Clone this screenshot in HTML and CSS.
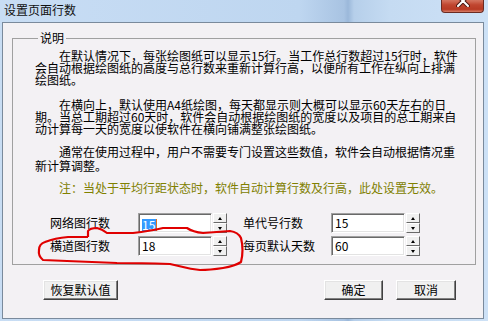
FILE: index.html
```html
<!DOCTYPE html>
<html lang="zh-CN">
<head>
    <meta charset="UTF-8">
    <title>设置页面行数</title>
    <link rel="stylesheet" href="styles.css">
</head>
<body>
    <div class="window">
        <div class="titlebar">
            <span class="title">设置页面行数</span>
            <div class="close">
                <svg width="14" height="11" viewBox="0 0 14 11">
                    <path d="M2 0 L12 10 M12 0 L2 10" stroke="#4a1a14" stroke-width="4" stroke-linecap="round"/>
                    <path d="M2 0 L12 10 M12 0 L2 10" stroke="#ffffff" stroke-width="2" stroke-linecap="round"/>
                </svg>
            </div>
        </div>

        <div class="client">
            <fieldset class="group">
                <legend>说明</legend>
                <p class="desc">在默认情况下，每张绘图纸可以显示15行。当工作总行数超过15行时，软件会自动根据绘图纸的高度与总行数来重新计算行高，以便所有工作在纵向上排满绘图纸。</p>
                <p class="desc desc-2">在横向上，默认使用A4纸绘图，每天都显示则大概可以显示60天左右的日期。当总工期超过60天时，软件会自动根据绘图纸的宽度以及项目的总工期来自动计算每一天的宽度以使软件在横向铺满整张绘图纸。</p>
                <p class="desc desc-3">通常在使用过程中，用户不需要专门设置这些数值，软件会自动根据情况重新计算调整。</p>
                <p class="desc note">注：当处于平均行距状态时，软件自动计算行数及行高，此处设置无效。</p>

                <div class="fields">
                    <div class="field">
                        <span class="label">网络图行数</span>
                        <div class="edit"><span class="sel">15</span></div>
                        <div class="spin"><span class="up"></span><span class="down"></span></div>
                    </div>
                    <div class="field">
                        <span class="label">单代号行数</span>
                        <div class="edit">15</div>
                        <div class="spin"><span class="up"></span><span class="down"></span></div>
                    </div>
                    <div class="field">
                        <span class="label">横道图行数</span>
                        <div class="edit">18</div>
                        <div class="spin"><span class="up"></span><span class="down"></span></div>
                    </div>
                    <div class="field">
                        <span class="label">每页默认天数</span>
                        <div class="edit">60</div>
                        <div class="spin"><span class="up"></span><span class="down"></span></div>
                    </div>
                </div>
            </fieldset>

            <div class="actions">
                <button class="btn btn-reset">恢复默认值</button>
                <button class="btn btn-ok">确定</button>
                <button class="btn btn-cancel">取消</button>
            </div>
        </div>

        <!-- 红色手绘圈注 -->
        <svg class="mark" width="488" height="321" viewBox="0 0 488 321">
            <path d="M88,237 L88,231 Q90,228 97,228 Q102,229 107,233 L133,233 Q150,231 163,228 L187,228 Q193,232 203,233 L230,231 Q238,232 241,238 Q244,250 241,262 Q235,266 223,268 Q210,270 200,270 Q190,269 183,267 L170,264 Q140,263 117,263 L67,261 L43,260 Q38,256 39,250 Q39,244 45,242 Q55,238 68,237 L88,237"
                  fill="none" stroke="#e00000" stroke-width="2.2" stroke-linejoin="round"/>
        </svg>
    </div>
</body>
</html>
```

FILE: styles.css
```css
body {
    margin: 0;
    padding: 0;
    background-color: #c4daf1;
    font-family: "Noto Sans CJK SC", "Noto Sans", sans-serif;
    font-size: 12px;
    color: #000;
}

.window {
    position: relative;
    width: 488px;
    height: 321px;
    overflow: hidden;
    background: linear-gradient(to right, #c8ddf4 0, #bed6f0 300px, #a8c3e2 344px, #9bb8da 348px, #b6cfea 354px, #c5dbf2 390px, #cde1f6 100%);
}

.titlebar {
    display: flex;
    align-items: flex-start;
    height: 22px;
}

.title {
    padding: 3px 0 0 4px;
    line-height: 14px;
    color: #111;
}

.close {
    margin: -6px 4px 0 auto;
    width: 43px;
    height: 19px;
    display: flex;
    justify-content: center;
    align-items: flex-end;
    padding-bottom: 5px;
    box-sizing: border-box;
    border: 1px solid #6b2b22;
    border-top: none;
    border-radius: 0 0 4px 4px;
    background: linear-gradient(to bottom, #e0a090 0, #d06a55 40%, #c04630 60%, #b83a24 85%, #d8806a 100%);
}

.client {
    margin: 0 4px 0 2px;
    height: 297px;
    box-sizing: border-box;
    border: 1px solid #7a8a9c;
    background-color: #f3f1f4;
}

.group {
    margin: 8px 0 0 9px;
    width: 464px;
    box-sizing: border-box;
    padding: 5px 0 8px 22px;
    border: 1px solid #a0a0a0;
}

.group legend {
    margin-left: 3px;
    padding: 0 2px;
    line-height: 14px;
}

.desc {
    width: 424px;
    margin: 0;
    line-height: 12px;
    text-indent: 24px;
}

.desc-2 {
    margin-top: 13px;
}

.desc-3 {
    margin-top: 10px;
    line-height: 14px;
}

.note {
    margin-top: 8px;
    line-height: 14px;
    color: #808000;
}

.fields {
    display: grid;
    grid-template-columns: 193px 193px;
    row-gap: 3px;
    margin: 18px 0 0 15px;
}

.field {
    display: flex;
    align-items: center;
    height: 20px;
}

.label {
    width: 88px;
    line-height: 14px;
}

.edit {
    width: 74px;
    height: 20px;
    box-sizing: border-box;
    padding-left: 3px;
    line-height: 18px;
    background-color: #fff;
    border: 1px solid;
    border-color: #a0a0a0 #fff #fff #a0a0a0;
    box-shadow: inset 1px 1px #696969, inset -1px -1px #e3e3e3;
}

.sel {
    display: inline-block;
    line-height: 12px;
    padding: 0 1px 0 0;
    vertical-align: middle;
    background-color: #3399ff;
    color: #fff;
    border-right: 1px solid #e07020;
}

.spin {
    display: flex;
    flex-direction: column;
    margin-left: 1px;
    width: 14px;
}

.spin span {
    display: flex;
    justify-content: center;
    align-items: center;
    height: 10px;
    box-sizing: border-box;
    border: 1px solid;
    border-color: #fff #696969 #696969 #fff;
    background-color: #f0f0f0;
}

.spin .up::before {
    content: "";
    border-left: 2px solid transparent;
    border-right: 2px solid transparent;
    border-bottom: 3px solid #000;
}

.spin .down::before {
    content: "";
    border-left: 2px solid transparent;
    border-right: 2px solid transparent;
    border-top: 3px solid #000;
}

.actions {
    display: flex;
    gap: 13px;
    margin-top: 15px;
    padding: 0 27px 0 40px;
}

.btn {
    height: 20px;
    padding: 0;
    font-family: inherit;
    font-size: 12px;
    line-height: 16px;
    color: #000;
    background-color: #f0f0f0;
    border: 1px solid;
    border-color: #fff #404040 #404040 #fff;
    box-shadow: inset -1px -1px #808080, inset 1px 1px #e3e3e3;
}

.btn-reset {
    width: 75px;
    margin-right: auto;
}

.btn-ok {
    width: 59px;
}

.btn-cancel {
    width: 60px;
}

.mark {
    position: absolute;
    left: 0;
    top: 0;
    pointer-events: none;
}
```
